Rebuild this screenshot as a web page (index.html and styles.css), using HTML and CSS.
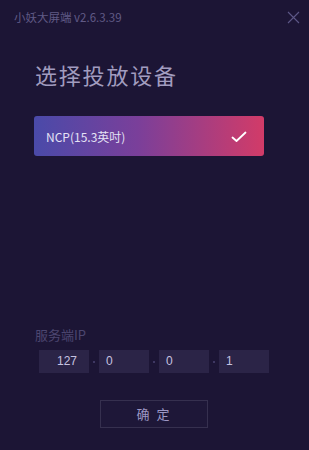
FILE: index.html
```html
<!DOCTYPE html>
<html>
<head>
<meta charset="utf-8">
<link rel="stylesheet" href="styles.css">
</head>
<body>
<div class="win">
  <div class="titlebar">
    <span class="apptitle">小妖大屏端 v2.6.3.39</span>
    <svg class="close" width="13" height="13" viewBox="0 0 13 13"><path d="M1 1L12 12M12 1L1 12" stroke="#5d5787" stroke-width="1.1"/></svg>
  </div>
  <h1 class="heading">选择投放设备</h1>
  <div class="device">
    <span class="devname">NCP(15.3英吋)</span>
    <svg class="check" width="16" height="12" viewBox="0 0 16 12"><path d="M1.5 6.5L5.5 10L14.5 1.5" fill="none" stroke="#ffffff" stroke-width="1.8" stroke-linecap="round" stroke-linejoin="round"/></svg>
  </div>
  <div class="spacer"></div>
  <div class="iplabel">服务端IP</div>
  <div class="iprow">
    <div class="ipbox first">127</div>
    <span class="dot"></span>
    <div class="ipbox">0</div>
    <span class="dot"></span>
    <div class="ipbox">0</div>
    <span class="dot"></span>
    <div class="ipbox">1</div>
  </div>
  <div class="btnrow">
    <div class="btn">确&nbsp;定</div>
  </div>
</div>
</body>
</html>
```
FILE: styles.css
```css
html, body {
  margin: 0;
  padding: 0;
  background: #1c1535;
}
.win {
  width: 309px;
  height: 450px;
  box-sizing: border-box;
  background: #1c1535;
  display: flex;
  flex-direction: column;
  font-family: "Noto Sans CJK SC", "Noto Sans", sans-serif;
}
.titlebar {
  height: 34px;
  display: flex;
  align-items: center;
  justify-content: space-between;
  padding: 0 9px 0 14px;
}
.apptitle {
  font-size: 11.5px;
  color: #605a85;
  margin-top: -1px;
}
.close {
  margin-top: 1px;
}
.heading {
  margin: 24px 0 0 35px;
  font-size: 22px;
  font-weight: 400;
  line-height: 32px;
  color: #a19cbf;
  letter-spacing: 1.8px;
}
.device {
  margin: 26px 0 0 34px;
  width: 230px;
  height: 40px;
  border-radius: 3px;
  background: linear-gradient(90deg, #4a4aa9 0%, #7a3f9a 45%, #d23b68 100%);
  display: flex;
  align-items: center;
  justify-content: space-between;
  padding: 0 17px 0 12px;
  box-sizing: border-box;
}
.devname {
  font-size: 12px;
  color: #e4e2f5;
}
.check {
  margin-top: 1px;
}
.spacer {
  flex: 1;
}
.iplabel {
  margin-left: 35px;
  margin-bottom: 6px;
  font-size: 13px;
  color: #4c4670;
  line-height: 18px;
}
.iprow {
  margin: 0 0 0 39px;
  display: flex;
  align-items: center;
  gap: 4px;
}
.ipbox {
  width: 50px;
  height: 23px;
  background: #2b2447;
  color: #c6c2e0;
  font-size: 12px;
  line-height: 23px;
  box-sizing: border-box;
  padding-left: 7px;
  font-family: "Liberation Sans", "Noto Sans CJK SC", sans-serif;
}
.ipbox.first {
  text-align: right;
  padding-left: 0;
  padding-right: 12px;
}
.dot {
  width: 2px;
  height: 2px;
  background: #3e3762;
}
.btnrow {
  display: flex;
  margin: 27px 0 22px 100px;
}
.btn {
  width: 108px;
  height: 28px;
  box-sizing: border-box;
  border: 1px solid #36304f;
  background: #1e1738;
  color: #9d97c4;
  font-size: 13px;
  line-height: 26px;
  text-align: center;
  letter-spacing: 2px;
}
```
